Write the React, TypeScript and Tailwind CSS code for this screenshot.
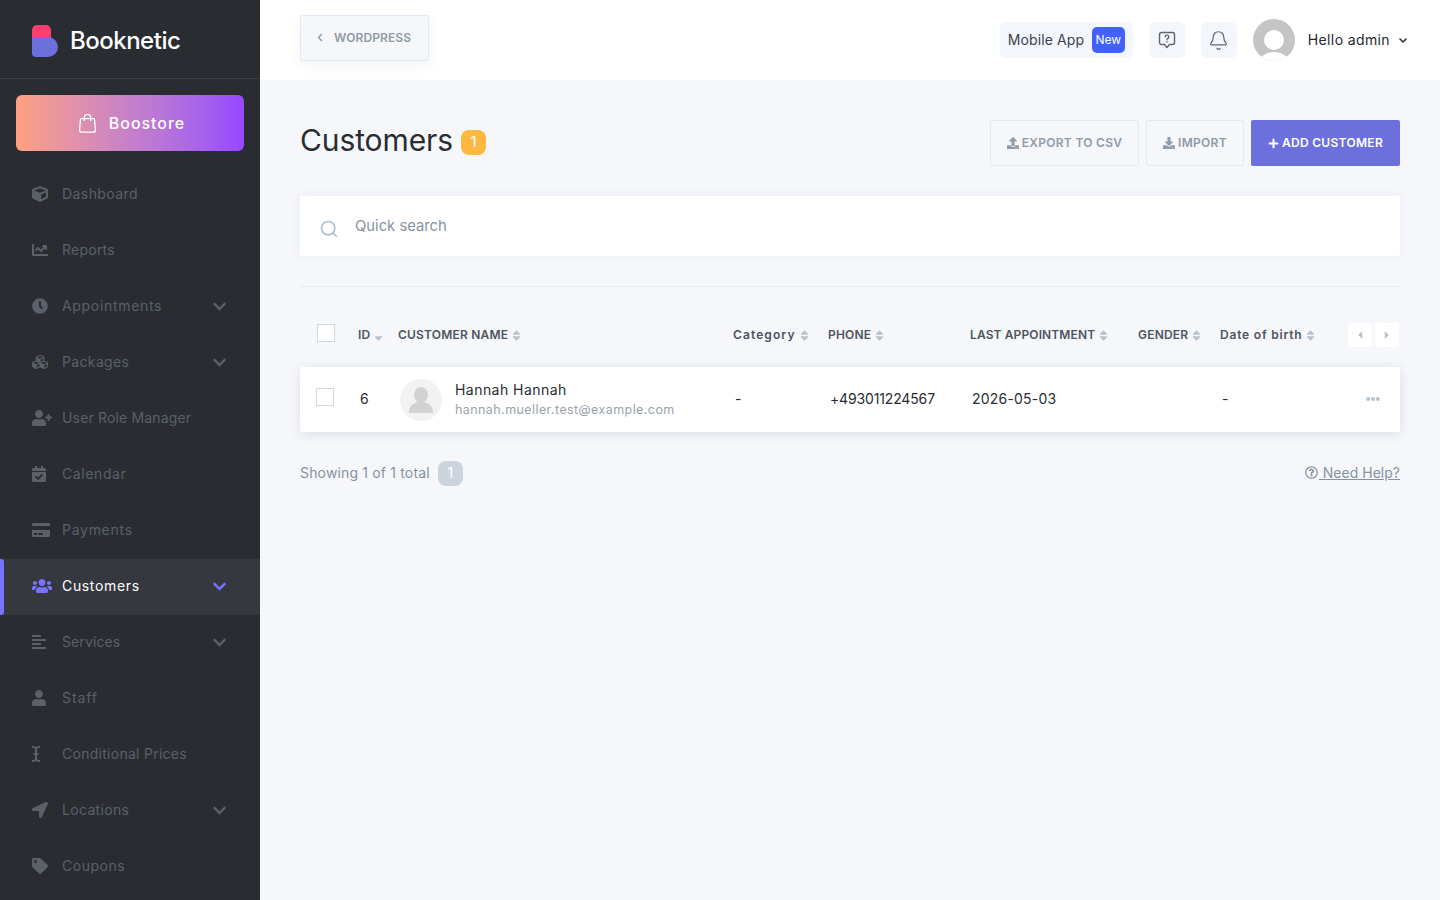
import React from "react";
import { Bell, Search } from "lucide-react";
import {
  FaCube, FaChartLine, FaClock, FaCubes, FaUserPlus, FaCalendarCheck, FaCreditCard, FaUsers,
  FaAlignLeft, FaUser, FaICursor, FaLocationArrow, FaTag, FaChevronDown, FaChevronLeft,
  FaUpload, FaDownload, FaPlus, FaSort, FaSortDown, FaCaretLeft, FaCaretRight, FaEllipsisH, FaRegQuestionCircle,
} from "react-icons/fa";

const menu: { label: string; Icon: React.ComponentType<{ className?: string }>; sub?: boolean; active?: boolean; size: string; tr: string }[] = [
  { label: "Dashboard", Icon: FaCube, size: "w-4 h-4", tr: "tracking-[0.43px]" },
  { label: "Reports", Icon: FaChartLine, size: "w-4 h-4", tr: "tracking-[0.24px]" },
  { label: "Appointments", Icon: FaClock, sub: true, size: "w-4 h-4", tr: "tracking-[0.68px]" },
  { label: "Packages", Icon: FaCubes, sub: true, size: "w-4 h-4", tr: "tracking-[0.35px]" },
  { label: "User Role Manager", Icon: FaUserPlus, size: "w-5 h-4", tr: "tracking-[0.16px]" },
  { label: "Calendar", Icon: FaCalendarCheck, size: "w-[14px] h-4", tr: "tracking-[0.6px]" },
  { label: "Payments", Icon: FaCreditCard, size: "w-[18px] h-4", tr: "tracking-[0.72px]" },
  { label: "Customers", Icon: FaUsers, sub: true, active: true, size: "w-5 h-4", tr: "tracking-[0.65px]" },
  { label: "Services", Icon: FaAlignLeft, sub: true, size: "w-[14px] h-4", tr: "tracking-[0.1px]" },
  { label: "Staff", Icon: FaUser, size: "w-[14px] h-4", tr: "tracking-[0.9px]" },
  { label: "Conditional Prices", Icon: FaICursor, size: "w-2 h-4", tr: "tracking-[0.27px]" },
  { label: "Locations", Icon: FaLocationArrow, sub: true, size: "w-4 h-4", tr: "tracking-[0.32px]" },
  { label: "Coupons", Icon: FaTag, size: "w-4 h-4", tr: "tracking-[0.53px]" },
];

const COLS = "grid grid-cols-[58px_40px_335px_95px_142px_168px_82px_128px_52px] items-center";

function Th({ label, down, tr = "tracking-[0.2px]" }: { label: string; down?: boolean; tr?: string }) {
  return (
    <div className={`flex items-center gap-[4px] text-[12px] font-semibold text-[#4d545e] whitespace-nowrap ${tr}`}>
      {label}
      {down ? <FaSortDown className="h-[13px] w-[9px] text-[#b7c3cc]" /> : <FaSort className="h-[13px] w-[9px] text-[#b7c3cc]" />}
    </div>
  );
}

export default function App() {
  return (
    <div className="flex h-[900px] w-[1440px] overflow-hidden bg-[#f5f7fb] font-['Inter','Liberation_Sans',sans-serif]">
      <aside className="flex w-[260px] shrink-0 flex-col bg-[#292d32]">
        <div className="flex h-[79px] shrink-0 items-center gap-[12px] border-b border-[#3a3e43] pl-[32px] pt-[3px]">
          <svg width="26" height="32" viewBox="0 0 26 32" className="shrink-0">
            <path d="M0 5a5 5 0 0 1 5-5h9a5 5 0 0 1 5 5v9H0z" fill="#ff3d6e" />
            <path d="M0 12h16a10 10 0 0 1 0 20H4a4 4 0 0 1-4-4z" fill="#6c70dc" />
          </svg>
          <span className="text-[24px] font-medium leading-none tracking-[-0.5px] text-white">Booknetic</span>
        </div>
        <div className="px-4 pt-4 pb-4">
          <div className="flex h-[56px] items-center justify-center gap-[13px] rounded-[6px] bg-gradient-to-r from-[#ffa07f] to-[#9747ff] pl-[4px] text-white">
            <svg width="17" height="19" viewBox="0 0 17 19" fill="none" stroke="#fff" strokeWidth="1.3" strokeLinejoin="round">
              <path d="M2.4 4.7h12.2a1 1 0 0 1 1 .9l.8 10.4a2 2 0 0 1-2 2.2H2.6a2 2 0 0 1-2-2.2l.8-10.4a1 1 0 0 1 1-.9z" />
              <path d="M5.3 7V3.6a3.2 3.2 0 0 1 6.4 0V7" />
            </svg>
            <span className="mb-[1px] text-[16px] font-medium tracking-[0.95px]">Boostore</span>
          </div>
        </div>
        <nav className="flex flex-col">
          {menu.map(({ label, Icon, sub, active, size, tr }) => (
            <div key={label} className={`flex h-[56px] shrink-0 items-center ${active ? "bg-[#35383e] text-white" : "text-[#5b6069]"}`}>
              <span className={`mr-[28px] h-full w-[4px] shrink-0 rounded-r-[3px] ${active ? "bg-[#7772ff]" : ""}`} />
              <span className="mb-[2px] flex w-[30px] shrink-0 items-center">
                <Icon className={`${size} ${active ? "text-[#7772ff]" : "text-[#5b6069]"}`} />
              </span>
              <span className={`flex-1 pb-[4px] text-[14px] whitespace-nowrap ${tr}`}>{label}</span>
              {sub && <FaChevronDown className={`mr-[33px] mb-[2px] h-[15px] w-[15px] ${active ? "text-[#7772ff]" : "text-[#5b6069]"}`} />}
            </div>
          ))}
        </nav>
      </aside>

      <div className="flex min-w-0 flex-1 flex-col">
        <header className="flex h-[80px] shrink-0 items-center bg-white pl-[40px] pr-[32px]">
          <div className="mb-[5px] flex h-[46px] w-[129px] items-center gap-[11px] rounded-[2px] border border-[#e3e9f3] bg-[#f5f7fb] pl-[16px] shadow-[0_4px_14px_rgba(40,50,80,0.06)]">
            <FaChevronLeft className="h-[9px] w-[6px] text-[#8f9ba6]" />
            <span className="text-[12px] font-semibold tracking-[0.1px] text-[#8f9ba6]">WORDPRESS</span>
          </div>
          <div className="ml-auto flex h-[36px] w-[133px] items-center justify-between rounded-[6px] bg-[#f3f6fa] pl-[8px] pr-[8px]">
            <span className="mb-[2px] text-[14px] tracking-[0.1px] text-[#3a4250]">Mobile App</span>
            <span className="flex h-[26px] w-[33px] items-center justify-center rounded-[5px] bg-[#4361ff] text-[12px] text-white">New</span>
          </div>
          <div className="ml-[16px] flex h-[36px] w-[36px] items-center justify-center rounded-[6px] bg-[#f3f6fa]">
            <svg width="18" height="18" viewBox="0 0 18 18" fill="none" stroke="#5d6773" strokeWidth="1.4" strokeLinejoin="round" strokeLinecap="round">
              <path d="M3.5 1.5h11a2 2 0 0 1 2 2v8a2 2 0 0 1-2 2h-3L9 16.5l-2.5-3h-3a2 2 0 0 1-2-2v-8a2 2 0 0 1 2-2z" />
              <path d="M7.2 5.8a1.8 1.8 0 1 1 2.6 1.7c-.5.3-.8.6-.8 1.2" />
              <path d="M9 10.8v.1" />
            </svg>
          </div>
          <div className="ml-[16px] flex h-[36px] w-[36px] items-center justify-center rounded-[6px] bg-[#f3f6fa]">
            <Bell className="h-[21px] w-[21px] text-[#5d6773]" strokeWidth={1.4} />
          </div>
          <svg width="42" height="42" viewBox="0 0 42 42" className="ml-[16px] shrink-0">
            <defs>
              <clipPath id="avatarClip"><circle cx="21" cy="21" r="21" /></clipPath>
            </defs>
            <g clipPath="url(#avatarClip)">
              <rect width="42" height="42" fill="#c4c4c4" />
              <circle cx="21" cy="21" r="10" fill="#fff" />
              <ellipse cx="21" cy="46" rx="16" ry="13" fill="#fff" />
            </g>
          </svg>
          <span className="ml-[13px] mb-[2px] text-[14px] tracking-[0.38px] text-[#24292f]">Hello admin</span>
          <FaChevronDown className="ml-[8px] h-[9px] w-[10px] text-[#24292f]" />
        </header>

        <main className="flex flex-col px-[40px] pt-[40px]">
          <div className="flex h-[46px] items-center">
            <h1 className="mb-[6px] text-[30px] font-normal leading-none tracking-[-0.1px] text-[#292d32]">Customers</h1>
            <span className="mb-[2px] ml-[8px] flex h-[25px] w-[25px] items-center justify-center rounded-[8px] bg-[#ffb83f] text-[15px] text-white">1</span>
            <div className="ml-auto flex text-[12px] font-semibold tracking-[0.3px]">
              <div className="flex h-[46px] w-[149px] items-center justify-center gap-[3px] rounded-[2px] border border-[#e3e9f3] text-[#8f9ba6]">
                <FaUpload className="h-3 w-3" /> EXPORT TO CSV
              </div>
              <div className="ml-[7px] flex h-[46px] w-[98px] items-center justify-center gap-[3px] rounded-[2px] border border-[#e3e9f3] text-[#8f9ba6]">
                <FaDownload className="h-3 w-3" /> IMPORT
              </div>
              <div className="ml-[7px] flex h-[46px] w-[149px] items-center justify-center gap-[3px] rounded-[2px] bg-[#6c70dc] text-white">
                <FaPlus className="h-[11px] w-[11px]" /> ADD CUSTOMER
              </div>
            </div>
          </div>

          <div className="mt-[30px] flex h-[60px] items-center bg-white pl-[19px] shadow-[0_0_12px_rgba(40,50,80,0.05)]">
            <Search className="mt-[6px] h-[20px] w-[20px] text-[#adc0c8]" strokeWidth={2} />
            <span className="ml-[16px] text-[14.8px] text-[#87929e]">Quick search</span>
          </div>

          <div className="mt-[30px] h-px bg-[#e6eaf2]" />

          <div className={`${COLS} h-[80px] pt-[16px]`}>
            <div className="mb-[4px] pl-[17px]"><div className="h-[18px] w-[18px] border border-[#d0d9e0] bg-white" /></div>
            <Th label="ID" down />
            <Th label="CUSTOMER NAME" />
            <Th label="Category" tr="tracking-[1.1px]" />
            <Th label="PHONE" />
            <Th label="LAST APPOINTMENT" tr="tracking-[0.12px]" />
            <Th label="GENDER" />
            <Th label="Date of birth" tr="tracking-[0.8px]" />
            <div className="flex gap-[3px]">
              <div className="flex h-[24px] w-[24px] items-center justify-center rounded-[2px] bg-white"><FaCaretLeft className="h-[12px] w-[8px] text-[#b7c3cc]" /></div>
              <div className="flex h-[24px] w-[24px] items-center justify-center rounded-[2px] bg-white"><FaCaretRight className="h-[12px] w-[8px] text-[#b7c3cc]" /></div>
            </div>
          </div>

          <div className={`${COLS} h-[65px] rounded-[2px] bg-white text-[14px] text-[#292d32] shadow-[0_2px_12px_rgba(40,50,80,0.12)]`}>
            <div className="mb-[5px] pl-[16px]"><div className="h-[18px] w-[18px] border border-[#d0d9e0]" /></div>
            <div className="mb-[2px] pl-[2px]">6</div>
            <div className="flex items-center pl-[2px]">
              <div className="flex h-[42px] w-[42px] shrink-0 items-center justify-center overflow-hidden rounded-full bg-[#f2f2f2]">
                <svg width="24" height="26" viewBox="0 0 24 26" fill="#d1d2d4">
                  <ellipse cx="12" cy="8" rx="7" ry="8" />
                  <path d="M0 26c0-7 4-10 9-11h6c5 1 9 4 9 11z" />
                </svg>
              </div>
              <div className="ml-[13px] flex flex-col">
                <span className="text-[14px] leading-[20px] tracking-[0.45px] text-[#292d32]">Hannah Hannah</span>
                <span className="text-[12.5px] leading-[19px] tracking-[0.42px] text-[#9aa3ad]">hannah.mueller.test@example.com</span>
              </div>
            </div>
            <div className="mb-[2px] pl-[2px]">-</div>
            <div className="mb-[2px] pl-[2px] tracking-[-0.15px]">+493011224567</div>
            <div className="mb-[2px] pl-[2px] tracking-[0.2px]">2026-05-03</div>
            <div />
            <div className="mb-[2px] pl-[2px]">-</div>
            <div className="mb-[2px] pl-[18px]"><FaEllipsisH className="h-[14px] w-[14px] text-[#b7c3cc]" /></div>
          </div>

          <div className="mt-[29px] flex h-[25px] items-center">
            <span className="mb-[2px] text-[14px] tracking-[0.16px] text-[#87929e]">Showing 1 of 1 total</span>
            <span className="ml-[8px] flex h-[25px] w-[25px] items-center justify-center rounded-[8px] bg-[#cbd3dc] text-[15px] text-white">1</span>
            <span className="mb-[2px] ml-auto flex items-center text-[14px] text-[#87929e]">
              <FaRegQuestionCircle className="mr-[1px] h-[13px] w-[13px]" />
              <span className="whitespace-pre tracking-[0.02px] underline"> Need Help?</span>
            </span>
          </div>
        </main>
      </div>
    </div>
  );
}
